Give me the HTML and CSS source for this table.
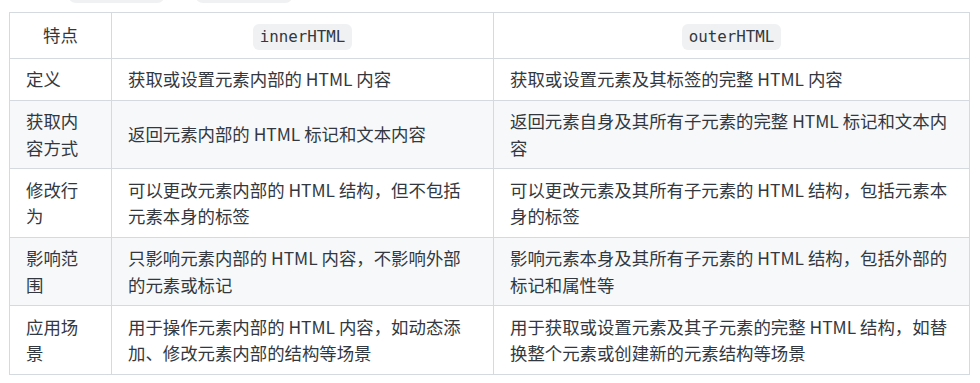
FILE: index.html
```html
<!DOCTYPE html>
<html lang="zh-CN">
<head>
<meta charset="utf-8">
<title>innerHTML vs outerHTML</title>
<link rel="stylesheet" href="styles.css">
</head>
<body>
<div class="prev-line" aria-hidden="true">
  <span class="pill pill-a"></span>
  <span class="pill pill-b"></span>
</div>
<table class="cmp">
  <colgroup>
    <col class="c1">
    <col class="c2">
    <col class="c3">
  </colgroup>
  <thead>
    <tr>
      <th>特点</th>
      <th><code class="code">innerHTML</code></th>
      <th><code class="code">outerHTML</code></th>
    </tr>
  </thead>
  <tbody>
    <tr>
      <td>定义</td>
      <td>获取或设置元素内部的 HTML 内容</td>
      <td>获取或设置元素及其标签的完整 HTML 内容</td>
    </tr>
    <tr>
      <td>获取内容方式</td>
      <td>返回元素内部的 HTML 标记和文本内容</td>
      <td>返回元素自身及其所有子元素的完整 HTML 标记和文本内容</td>
    </tr>
    <tr>
      <td>修改行为</td>
      <td>可以更改元素内部的 HTML 结构，但不包括元素本身的标签</td>
      <td>可以更改元素及其所有子元素的 HTML 结构，包括元素本身的标签</td>
    </tr>
    <tr>
      <td>影响范围</td>
      <td>只影响元素内部的 HTML 内容，不影响外部的元素或标记</td>
      <td>影响元素本身及其所有子元素的 HTML 结构，包括外部的标记和属性等</td>
    </tr>
    <tr>
      <td>应用场景</td>
      <td>用于操作元素内部的 HTML 内容，如动态添加、修改元素内部的结构等场景</td>
      <td>用于获取或设置元素及其子元素的完整 HTML 结构，如替换整个元素或创建新的元素结构等场景</td>
    </tr>
  </tbody>
</table>
</body>
</html>
```
FILE: styles.css
```css
html, body {
  margin: 0;
  padding: 0;
  background: #ffffff;
}

body {
  font-family: "Noto Sans CJK SC", "Noto Sans", sans-serif;
  color: #333840;
  font-size: 17.4px;
}

.prev-line {
  height: 3px;
  overflow: hidden;
  position: relative;
  margin-bottom: 9px;
}

.pill {
  position: absolute;
  bottom: 0;
  height: 26px;
  background: #eff1f3;
  border-radius: 8px;
}

.pill-a { left: 68px; width: 97px; }
.pill-b { left: 195px; width: 98px; }

.cmp {
  margin-left: 9px;
  border-collapse: collapse;
  table-layout: fixed;
  width: 960px;
}

.c1 { width: 102px; }
.c2 { width: 382px; }
.c3 { width: 476px; }

.cmp th,
.cmp td {
  border: 1px solid #d5d9e0;
  padding: 7.25px 16px;
  line-height: 26.5px;
  text-align: left;
  vertical-align: middle;
  font-weight: normal;
}

.cmp th {
  text-align: center;
  padding-top: 8.25px;
  padding-bottom: 8.25px;
}

.cmp tbody tr:nth-child(2n) td {
  background: #f6f8fa;
}

.code {
  display: inline-block;
  font-family: "DejaVu Sans Mono", "Liberation Mono", monospace;
  font-size: 15.8px;
  line-height: 26px;
  height: 26px;
  padding: 0 7px;
  background: #eff1f3;
  border-radius: 6px;
  color: #333840;
  vertical-align: middle;
}
```
